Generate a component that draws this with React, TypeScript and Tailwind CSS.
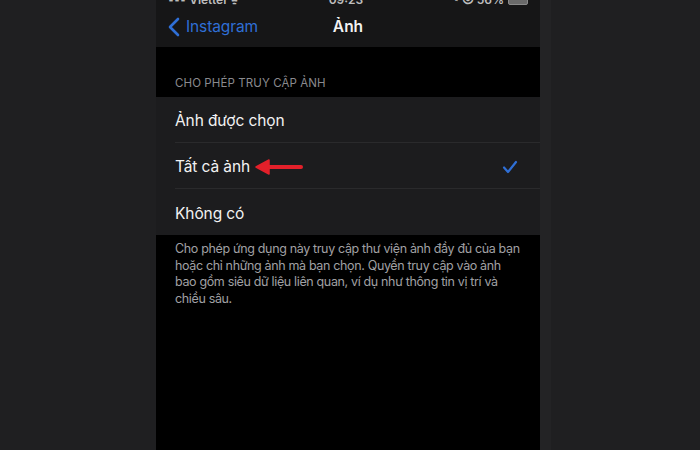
export default function App() {
  const rows = [
    { label: "Ảnh được chọn", checked: false, arrow: false },
    { label: "Tất cả ảnh", checked: true, arrow: true },
    { label: "Không có", checked: false, arrow: false },
  ];

  const footer = [
    "Cho phép ứng dụng này truy cập thư viện ảnh đầy đủ của bạn",
    "hoặc chỉ những ảnh mà bạn chọn. Quyền truy cập vào ảnh",
    "bao gồm siêu dữ liệu liên quan, ví dụ như thông tin vị trí và",
    "chiều sâu.",
  ];

  return (
    <div className="flex h-[450px] w-[700px] overflow-hidden bg-[#1f1f21] pl-[156px] font-['Inter','Noto_Sans',sans-serif]">
      <div className="flex w-[384px] flex-col bg-black">
        {/* Nav bar with cut-off status bar */}
        <div className="relative h-[47px] bg-[#161617]">
          <div className="absolute left-0 right-0 top-[-9px] flex items-center justify-between px-[12px] text-[12px] font-semibold text-[#bdbdbd]">
            <span>▪▪▪ Viettel ᯤ</span>
            <span>09:23</span>
            <span className="flex items-center gap-1">
              ◔ ⦿ 56%
              <span className="inline-block h-[10px] w-[20px] rounded-[2px] border border-[#8a8a8a] bg-[#6a6a6a]" />
            </span>
          </div>
          <div className="flex h-full items-center pt-[7px]">
            <div className="flex items-center pl-[11px] text-[#2f6fd6]">
              <svg width="14" height="20" viewBox="0 0 14 20" className="mr-[5px]">
                <path d="M11 2 L3 10 L11 18" fill="none" stroke="#2f6fd6" strokeWidth="2.6" strokeLinecap="round" strokeLinejoin="round" />
              </svg>
              <span className="text-[15.5px] tracking-[-0.1px]">Instagram</span>
            </div>
          </div>
          <div className="absolute inset-0 flex items-center justify-center pt-[7px] text-[15.5px] font-semibold text-[#f2f2f2]">
            Ảnh
          </div>
        </div>

        {/* Section header */}
        <div className="flex h-[50px] items-end px-[19px] pb-[5px] text-[11.5px] uppercase tracking-[0.1px] text-[#8a8a8e]">
          Cho phép truy cập ảnh
        </div>

        {/* List */}
        <div className="bg-[#1c1c1e]">
          {rows.map((r, i) => (
            <div key={r.label} className="flex h-[46px] items-center pl-[19px]">
              <div
                className={
                  "flex h-full flex-1 items-center pt-[3px] pr-[22px] " +
                  (i < rows.length - 1 ? "border-b border-[#2a2a2c]" : "")
                }
              >
                <span className="text-[15.5px] tracking-[-0.1px] text-[#f2f2f2]">{r.label}</span>
                {r.arrow && (
                  <svg width="50" height="16" viewBox="0 0 50 16" className="ml-[5px]">
                    <path d="M12 8 L46 8" stroke="#e3202a" strokeWidth="4" strokeLinecap="round" />
                    <path d="M1 8 L14 1 L14 15 Z" fill="#e3202a" stroke="#e3202a" strokeWidth="1.5" strokeLinejoin="round" />
                  </svg>
                )}
                <div className="flex-1" />
                {r.checked && (
                  <svg width="16" height="14" viewBox="0 0 16 14">
                    <path d="M2 7.5 L6 12 L14 2" fill="none" stroke="#2f6fd6" strokeWidth="2.2" strokeLinecap="round" strokeLinejoin="round" />
                  </svg>
                )}
              </div>
            </div>
          ))}
        </div>

        {/* Footer */}
        <div className="px-[19px] pt-[6px] text-[12.5px] leading-[16.5px] tracking-[-0.35px] text-[#a0a0a4]">
          {footer.map((l) => (
            <div key={l} className="whitespace-nowrap">{l}</div>
          ))}
        </div>
      </div>
      <div className="w-[11px] bg-[#232325]" />
    </div>
  );
}
